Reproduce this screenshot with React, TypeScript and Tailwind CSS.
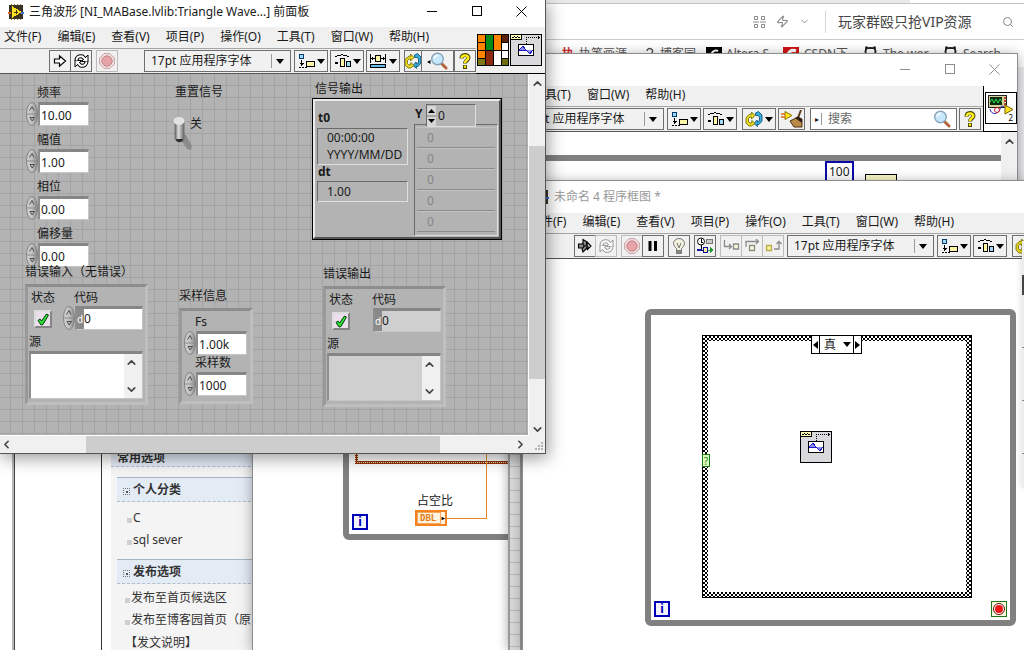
import type { ReactNode } from "react";
import { ChevronDown, ChevronUp, ChevronLeft, ChevronRight, Search, Github, Zap } from "lucide-react";

const fontStack = "font-['Noto_Sans','Noto_Sans_CJK_SC',sans-serif]";

/* ---------- icons ---------- */

const ViIcon = () => (
  <svg width="16" height="16" viewBox="0 0 16 16" shapeRendering="crispEdges" className="shrink-0">
    <rect x="1" y="1" width="14" height="14" fill="#3b3222" />
    <path d="M3 0v16M6 0v16M9 0v16M12 0v16" stroke="#8a7a58" strokeDasharray="1 14" />
    <path d="M0 9h3" stroke="#e8641c" strokeWidth="2" />
    <path d="M13 9h3" stroke="#3a72d8" strokeWidth="2" />
    <path d="M4 2l10 6-10 6z" fill="#ffe21f" />
    <path d="M6 8h4M8 6v4" stroke="#3b3222" />
  </svg>
);

const RunIcon = () => (
  <svg width="14" height="14" viewBox="0 0 14 14" fill="#fff" stroke="#000" strokeWidth="1.2">
    <path d="M1.5 5h5V1.8L12.5 7l-6 5.2V9h-5z" />
  </svg>
);

const BrokenRunIcon = () => (
  <svg width="16" height="16" viewBox="0 0 16 16" fill="#8b8b8b" stroke="#000" strokeWidth="1.1">
    <path d="M1.500 6h3l2-1 1 2-1 3h-5z" />
    <path d="M6 1.500l4 2.500-1 4 1 2-4 4-1-3 2.500-3L6 6z" />
    <path d="M10 4l4 4-4 4 1-3-1-2z" fill="#c9c9c9" />
  </svg>
);

const LoopIcon = ({ muted = false }: { muted?: boolean }) => {
  const ink = muted ? "#9a9a9a" : "#000";
  return (
    <svg width="17" height="16" viewBox="0 0 17 16" fill="none">
      <path d="M3.500 8C3.500 4 6 2.500 9.500 3.500L12 6M13.500 8c0 4-2.500 5.500-6 4.500L5 10" stroke={ink} strokeWidth="4" />
      <path d="M8.500 8.500h6.500V2zM8.500 7.500H2V14z" fill="#fff" stroke={ink} strokeLinejoin="round" />
      <path d="M3.500 7.500C3.500 4 6 2.500 9.500 3.500L13 7M13.500 8.500c0 3.500-2.500 5-6 4L4 9" stroke="#fff" strokeWidth="2" />
    </svg>
  );
};

const AbortIcon = () => (
  <svg width="16" height="16" viewBox="0 0 16 16">
    <path d="M5 .7h6L15.300 5v6L11 15.300H5L.7 11V5z" fill="#f4e6e6" stroke="#c39a9a" />
    <circle cx="8" cy="8" r="5.200" fill="#e8a3a6" stroke="#bf8488" />
  </svg>
);

const PauseIcon = () => (
  <svg width="12" height="12" viewBox="0 0 12 12">
    <path d="M1.500 1h3v10h-3zM7 1h3v10H7z" />
  </svg>
);

const BulbIcon = () => (
  <svg width="14" height="17" viewBox="0 0 14 17" fill="#f3f2de" stroke="#777">
    <path d="M4.500 10.500C3 9 1.500 7.500 1.500 5.500a5.500 5 0 0 1 11 0c0 2-1.500 3.500-3 5v2h-5z" />
    <path d="M5 5l2 5 2-5" fill="none" />
    <path d="M4.500 12.500h5v3h-5z" fill="#8b8b8b" />
  </svg>
);

const RetainIcon = () => (
  <svg width="18" height="18" viewBox="0 0 18 18" fill="none" shapeRendering="crispEdges">
    <circle cx="5" cy="4.500" r="3.500" fill="#fff" stroke="#000" shapeRendering="auto" />
    <path d="M5 2v3h2M5 8v5M1 13h7" stroke="#000" />
    <rect x="10.500" y="2.500" width="6" height="4" fill="#ccc" stroke="#777" />
    <rect x="7.500" y="10.500" width="4" height="5" fill="#ffef9a" stroke="#1414a8" />
    <path d="M1 13h5" stroke="#1414a8" strokeWidth="2" />
    <path d="M12 13h3M14 10l3 3-3 3z" stroke="#1d9d3d" fill="#1d9d3d" />
  </svg>
);

const StepIcon = ({ kind }: { kind: "into" | "over" | "out" }) => (
  <svg width="17" height="14" viewBox="0 0 17 14" fill="none" stroke="#8b8b8b" strokeWidth="1.300">
    {kind === "into" && (
      <>
        <path d="M1.500 1v6.500H8M6 5l2.500 2.500L6 10" />
        <path d="M10.500 5h5v5h-5z" fill="#fbf7d8" />
      </>
    )}
    {kind === "over" && (
      <>
        <path d="M2 8V2.500h12M12 0l2.500 2.500L12 5" />
        <path d="M5.500 6.500h5v5h-5z" fill="#fbf7d8" />
      </>
    )}
    {kind === "out" && (
      <>
        <path d="M9 10h5V3M11.500 5L14 2.500 16.500 5" />
        <path d="M1.500 6.500h5v5h-5z" fill="#f6f0a0" stroke="#b5ad4a" />
      </>
    )}
  </svg>
);

const AlignIcon = () => (
  <svg width="17" height="15" viewBox="0 0 17 15" shapeRendering="crispEdges" stroke="#000">
    <rect x="1.500" y=".5" width="4" height="4" fill="#9ddcf8" stroke="#0c3a6b" />
    <path d="M3.500 6v6M1.500 9.500h4M2.500 10.500h2M1 13.500h2M4 13.500h2M7 13.500h2" />
    <rect x="8.500" y="7.500" width="8" height="5" fill="#fdf5a6" />
  </svg>
);

const DistributeIcon = () => (
  <svg width="17" height="15" viewBox="0 0 17 15" shapeRendering="crispEdges" stroke="#000">
    <path d="M1 2.500h2M3 1.500h4M7 .5h2M9 1.500h4M13 2.500h2" />
    <path d="M1 8.500h3M1 9.500h3" />
    <rect x="6.500" y="4.500" width="4" height="8" fill="#fdf5a6" />
    <rect x="12.500" y="7.500" width="4" height="5" fill="#9ddcf8" />
  </svg>
);

const ResizeIcon = () => (
  <svg width="17" height="15" viewBox="0 0 17 15" shapeRendering="crispEdges" stroke="#000">
    <path d="M.5 0v9M15.500 0v9M1 4.500h4M11 4.500h4M2.500 3v3M13.500 3v3" />
    <rect x="5.500" y="1.500" width="5" height="6" fill="#fdf5a6" />
    <rect x=".5" y="10.500" width="15" height="3" fill="#66bfe6" />
  </svg>
);

const SwapIcon = () => (
  <svg width="18" height="16" viewBox="0 0 18 16" strokeWidth=".9" className="shrink-0">
    <path d="M10.500 2l3-1.500L17 4v6l-3 3.500h-2l.5 2-3.500-3 3-3.500.5 2h1L14.500 9V6L13 4.500h-2.500z" fill="#39a9d8" stroke="#10587e" />
    <path d="M5 3h2L6.500 1 10 4.500 6.500 8V6H5L3.500 7.500v3L5 12h1.500l.5-2.500 3 3L6.500 15H4L1 12V6.500z" fill="#e6d81e" stroke="#7d7408" />
  </svg>
);

const BroomIcon = () => (
  <svg width="22" height="18" viewBox="0 0 22 18">
    <path d="M20 0l-3 8" stroke="#5c3a1c" strokeWidth="2" />
    <path d="M9 11l8-4 4 2v8H13z" fill="#b98a48" stroke="#4a2f10" />
    <path d="M14 8l3-1.500 4 3v3.500z" fill="#2b2018" />
    <path d="M4 1.500l7 4-7 4z" fill="#ffe21f" stroke="#8a7200" />
    <path d="M0 4h4M0 7h4" stroke="#e06a1c" strokeWidth="1.500" />
  </svg>
);

const Magnifier = ({ arrow = false }: { arrow?: boolean }) => (
  <svg width="22" height="18" viewBox="0 0 22 18" className="shrink-0">
    {arrow && <path d="M0 10l3.500-2v4z" fill="#000" />}
    <path d="M14 11l5 5" stroke="#b4643c" strokeWidth="3" strokeLinecap="round" />
    <circle cx="10.500" cy="7" r="5.800" fill="#c6e8fa" stroke="#8aa5bb" strokeWidth="1.400" />
    <path d="M7 6.500a4 4 0 0 1 4-3" stroke="#fff" strokeWidth="1.500" fill="none" />
  </svg>
);

const HelpIcon = () => (
  <svg width="12" height="16" viewBox="0 0 12 16" fill="none">
    <path d="M2.500 5.500C2.500 1 9.500 1 9.500 4.800 9.500 7.500 6 7.200 6 10.500" stroke="#4c4600" strokeWidth="4" />
    <path d="M4 12h4v4H4z" fill="#4c4600" />
    <path d="M2.600 5.200C3 1.500 9.200 1.500 9.300 4.800 9.300 7.200 6 7.200 6 10" stroke="#fff01c" strokeWidth="2.400" />
    <path d="M4.900 12.600h2.200v2.200H4.900z" fill="#fff01c" />
  </svg>
);

const ConnectorPane = () => (
  <svg width="32" height="32" viewBox="0 0 32 32" shapeRendering="crispEdges" stroke="#000">
    <path d="M.5.500h8v8h-8zM.5 8.500h8v8h-8zM.5 16.500h8v8h-8z" fill="#ff8400" />
    <path d="M.5 24.500h8v7h-8z" fill="#7d7a16" />
    <path d="M8.500.500h8v16h-8z" fill="#068c16" />
    <path d="M8.500 16.500h8v15h-8z" fill="#8c2a0e" />
    <path d="M16.500.500h8v16h-8z" fill="#ff8400" />
    <path d="M16.500 16.500h8v15h-8z" fill="#fff" />
    <path d="M24.500.500h7v8h-7z" fill="#5c240c" />
    <path d="M24.500 8.500h7v8h-7zM24.500 16.500h7v8h-7z" fill="#fff" />
    <path d="M24.500 24.500h7v7h-7z" fill="#6f6c12" />
  </svg>
);

const TriangleWaveIcon = () => (
  <svg width="32" height="32" viewBox="0 0 32 32" shapeRendering="crispEdges">
    <rect x=".5" y=".5" width="31" height="31" fill="#d9d9dc" stroke="#000" />
    <rect x=".5" y=".5" width="11" height="5" fill="#ffffb0" stroke="#000" />
    <path d="M2 3.500h2M4 2.500h1M5 3.500h2M7 2.500h1M8 3.500h2" stroke="#000" />
    <path d="M16.500 3v7M16 3.500h12" stroke="#000" strokeDasharray="1 1" fill="none" />
    <path d="M28 2v3l2-1.500z" fill="#000" />
    <rect x="8.500" y="10.500" width="15" height="11" fill="#fff" stroke="#000" />
    <path d="M9 16h14" stroke="#1a1ac8" />
    <path d="M9 16l4-4 3 4M16 16l4 4 3-4" fill="#8f8fe6" stroke="#1a1ac8" />
  </svg>
);

const ScopeIcon = () => (
  <svg width="32" height="32" viewBox="0 0 32 32">
    <rect x=".5" y=".5" width="31" height="31" fill="#fff" stroke="#000" />
    <rect x="3.500" y="3.500" width="18" height="12" fill="#d5cf9a" stroke="#222" />
    <rect x="5" y="5" width="12" height="8" fill="#0c2c12" />
    <path d="M5 10l2-3 2 4 2-4 2 4 2-4 2 3" stroke="#31e052" fill="none" />
    <path d="M19 6h2M19 9h2M19 12h2" stroke="#b01818" strokeWidth="1.500" />
    <path d="M5 17c1 6 8 6 10 0s4-1 8 0" stroke="#2424c8" fill="none" />
    <circle cx="12" cy="18" r="2.500" fill="none" stroke="#d02020" />
    <path d="M20 13l8 4.500-8 4.500z" fill="#ffe21f" stroke="#7a5c00" />
    <text x="23.500" y="29" fontSize="8" fill="#000">2</text>
  </svg>
);

const Caret = () => (
  <svg width="8" height="5" viewBox="0 0 8 5" className="pointer-events-none shrink-0">
    <path d="M0 0h8L4 5z" />
  </svg>
);

const CheckMark = () => (
  <svg width="12" height="13" viewBox="0 0 12 13">
    <path d="M1 7.500l2-1.500 1.500 2L9.500 1l2 1L6 11.500l-2 .5z" fill="#2fdc3a" stroke="#063f0a" />
  </svg>
);

/* ---------- window chrome ---------- */

const Caption = ({ muted = false, className }: { muted?: boolean; className: string }) => (
  <div className={`flex shrink-0 ${muted ? "text-[#8e8e8e]" : "text-black"} ${className}`}>
    <button aria-label="最小化" className="flex w-[45px] items-center justify-center">
      <svg width="10" height="10" viewBox="0 0 10 10" stroke="currentColor" shapeRendering="crispEdges"><path d="M0 5.500h10" /></svg>
    </button>
    <button aria-label="最大化" className="flex w-[45px] items-center justify-center">
      <svg width="10" height="10" viewBox="0 0 10 10" stroke="currentColor" fill="none" shapeRendering="crispEdges"><path d="M.5.500h9v9h-9z" /></svg>
    </button>
    <button aria-label="关闭" className="flex w-[45px] items-center justify-center">
      <svg width="11" height="11" viewBox="0 0 11 11" stroke="currentColor"><path d="M.5.500l10 10M10.500.500l-10 10" /></svg>
    </button>
  </div>
);

const MenuBar = ({ items, className }: { items: string[]; className: string }) => (
  <nav className={`flex items-center gap-4 whitespace-nowrap bg-[#f0f0f0] pb-0.5 ${className}`}>
    {items.map((item) => (
      <button key={item} className="shrink-0 leading-4">{item}</button>
    ))}
  </nav>
);

const ToolBtn = ({ label, className = "w-[22px]", faint = false, children }: { label: string; className?: string; faint?: boolean; children: ReactNode }) => (
  <button
    aria-label={label}
    className={`flex h-[22px] shrink-0 items-center justify-center gap-0.5 overflow-hidden border bg-[#f1f1f1] ${faint ? "border-[#bcbcbc]" : "border-[#6f6f6f]"} ${className}`}
  >
    {children}
  </button>
);

const FontSelect = ({ className = "" }: { className?: string }) => (
  <div className={`flex h-[22px] w-[147px] shrink-0 items-center border border-[#6f6f6f] bg-[#f1f1f1] pr-1.5 ${className}`}>
    <select aria-label="字体" className="h-5 min-w-0 flex-1 appearance-none pl-1.5 outline-none">
      <option>17pt 应用程序字体</option>
    </select>
    <span className="mr-1 h-3.5 w-px bg-[#9a9a9a]" />
    <Caret />
  </div>
);

const LayoutTools = () => (
  <>
    <ToolBtn label="对齐对象" className="ml-[3px] w-[34px]"><AlignIcon /><Caret /></ToolBtn>
    <ToolBtn label="分布对象" className="ml-0.5 w-[34px]"><DistributeIcon /><Caret /></ToolBtn>
  </>
);

const toolbarLook = "flex h-[26px] items-center border-y border-t-[#a5a5a5] border-b-[#555] bg-[#f0f0f0]";

/* ---------- front panel controls ---------- */

const Spinner = () => (
  <svg width="12" height="24" viewBox="0 0 12 24" className="shrink-0">
    <defs>
      <linearGradient id="knob" x1="0" x2="1">
        <stop offset="0" stopColor="#d2d2d2" />
        <stop offset=".5" stopColor="#c2c2c2" />
        <stop offset="1" stopColor="#868686" />
      </linearGradient>
    </defs>
    <ellipse cx="6" cy="12" rx="5.500" ry="11.500" fill="url(#knob)" stroke="#848484" />
    <path d="M1 12h10" stroke="#8a8a8a" />
    <path d="M3.500 8.500L6 4.500l2 4M4 15.500h4.500L6.200 19z" fill="none" stroke="#4f4f4f" />
  </svg>
);

const sunken = "border-t-[3px] border-l-2 border-r border-b border-t-[#868686] border-l-[#8e8e8e] border-r-[#c6c6c6] border-b-[#c6c6c6]";
const clusterEdge = "border-[3px] border-t-[#8d8d8d] border-l-[#999] border-r-[#bfbfbf] border-b-[#bfbfbf] bg-[#b3b3b3]";

const NumericControl = ({ id, label, value }: { id: string; label: string; value: string }) => (
  <div className="flex flex-col gap-px">
    <label htmlFor={id} className="ml-[11px] leading-4">{label}</label>
    <div className="flex">
      <Spinner />
      <input id={id} defaultValue={value} className={`h-6 w-[51px] bg-white pl-px outline-none ${sunken}`} />
    </div>
  </div>
);

const ErrorCluster = ({ id, indicator = false }: { id: string; indicator?: boolean }) => {
  const fill = indicator ? "bg-[#cfcfcf]" : "bg-white";
  return (
    <div className={`h-[121px] w-[123px] pt-[3px] ${clusterEdge}`}>
      <div className="flex pl-[3px]">
        <div className="w-8 shrink-0">
          <p className="leading-4">状态</p>
          <button aria-label="状态" className="ml-[3px] mt-1 flex size-[18px] items-center justify-center border-2 border-t-[#ddd] border-l-[#ddd] border-r-[#858585] border-b-[#858585] bg-[#ecdfec]">
            <CheckMark />
          </button>
        </div>
        <div>
          <label htmlFor={`${id}-code`} className="ml-[11px] block leading-4">代码</label>
          <div className="flex">
            {indicator ? <span className="w-3" /> : <Spinner />}
            <div className={`flex h-6 w-[68px] ${sunken} ${fill}`}>
              <span className="w-[7px] shrink-0 bg-[#8a8a8a] text-[10px] leading-5 text-white">d</span>
              <input id={`${id}-code`} defaultValue="0" readOnly={indicator} className="w-0 flex-1 outline-none" />
            </div>
          </div>
        </div>
      </div>
      <label htmlFor={`${id}-source`} className="ml-px mt-1 block leading-4">源</label>
      <div className={`ml-px mt-px flex h-12 w-[114px] ${sunken} ${fill}`}>
        <textarea id={`${id}-source`} readOnly={indicator} className="w-0 flex-1 resize-none outline-none" />
        <div className="flex w-[18px] flex-col items-center justify-between bg-[#f0f0f0] py-0.5 pr-1 text-[#444]">
          <ChevronUp size={13} strokeWidth={3} />
          <ChevronDown size={13} strokeWidth={3} />
        </div>
      </div>
    </div>
  );
};

const readout = "border border-t-[#6a6a6a] border-l-[#6a6a6a] border-r-[#dedede] border-b-[#dedede]";

const WaveformCluster = () => (
  <div className="border border-black">
    <div className="flex h-[140px] w-[188px] border-2 border-t-[#ececec] border-l-[#ececec] border-r-[#555] border-b-[#555] bg-[#b3b3b3] pl-0.5">
      <div className="w-[91px] pt-[9px]">
        <h3 className="pl-px font-bold leading-4">t0</h3>
        <div className={`mt-0.5 h-[37px] overflow-hidden whitespace-nowrap pl-[9px] leading-[17px] ${readout}`}>
          <p>00:00:00</p>
          <p>YYYY/MM/DD</p>
        </div>
        <h3 className="pl-px font-bold leading-[14px]">dt</h3>
        <p className={`mt-0.5 pl-[9px] leading-[19px] ${readout}`}>1.00</p>
      </div>
      <div className="ml-1.5 w-[84px] pt-[3px]">
        <div className="relative flex">
          <label htmlFor="y-index" className="w-3 pl-px font-bold leading-5">Y</label>
          <div className={`flex h-[23px] w-[50px] items-center bg-[#b3b3b3] ${readout}`}>
            <svg width="9" height="20" viewBox="0 0 9 20" className="bg-[#d6d6d6]">
              <path d="M1 7l3.500-4L8 7zM1 13l3.500 4L8 13z" />
              <path d="M0 10h9" stroke="#777" />
            </svg>
            <input id="y-index" defaultValue="0" className="w-0 flex-1 pl-0.5 outline-none" />
          </div>
        </div>
        <ul className={`-mt-[3px] h-[112px] p-0.5 text-[#858585] ${readout}`}>
          {[0, 1, 2, 3, 4].map((row) => (
            <li key={row} className="h-[21px] border-b border-t border-b-[#8c8c8c] border-t-[#c4c4c4] pl-2.5 leading-[19px]">0</li>
          ))}
        </ul>
      </div>
    </div>
  </div>
);

const ToggleSwitch = () => (
  <svg width="24" height="36" viewBox="0 0 24 36">
    <defs>
      <linearGradient id="lever" x1="0" x2="1">
        <stop offset="0" stopColor="#6c6c6c" />
        <stop offset=".4" stopColor="#dcdcdc" />
        <stop offset="1" stopColor="#6a6a6a" />
      </linearGradient>
    </defs>
    <path d="M10 16l5 3 6 11-1 4-4-1-6-9z" fill="#8b8b8b" />
    <rect x="4" y="3" width="9" height="23" rx="4.500" fill="url(#lever)" stroke="#707070" />
    <ellipse cx="8" cy="5" rx="5.500" ry="4" fill="#e3e3e3" />
    <path d="M5 23a3.500 3 0 0 0 7 0z" fill="#2c2c2c" />
  </svg>
);

const FrontPanelWindow = () => (
  <section className="absolute left-0 top-0 flex h-[454px] w-[546px] flex-col border-b border-r border-[#555] bg-[#f0f0f0] shadow-[2px_4px_16px_rgba(0,0,0,0.4)]">
    <header className="flex h-[27px] shrink-0 bg-white pl-2 pr-px">
      <div className="flex h-[23px] flex-1 items-center gap-[5px] whitespace-nowrap">
        <ViIcon />
        <h1>三角波形 [NI_MABase.lvlib:Triangle Wave...] 前面板</h1>
      </div>
      <Caption className="h-[22px]" />
    </header>
    <div className="flex shrink-0">
      <div className="min-w-0 flex-1">
        <MenuBar className="h-[21px] pl-1" items={["文件(F)", "编辑(E)", "查看(V)", "项目(P)", "操作(O)", "工具(T)", "窗口(W)", "帮助(H)"]} />
        <div className={`pl-[49px] ${toolbarLook}`}>
          <ToolBtn label="运行"><RunIcon /></ToolBtn>
          <ToolBtn label="连续运行" className="-ml-px w-[22px]"><LoopIcon /></ToolBtn>
          <ToolBtn label="中止执行" className="ml-1 w-[22px]" faint><AbortIcon /></ToolBtn>
          <FontSelect className="ml-[26px]" />
          <LayoutTools />
          <ToolBtn label="调整对象大小" className="ml-0.5 w-[34px]"><ResizeIcon /><Caret /></ToolBtn>
          <ToolBtn label="重新排序" className="ml-1 w-[18px]"><SwapIcon /></ToolBtn>
          <ToolBtn label="搜索" className="-ml-px w-[33px]"><Magnifier arrow /></ToolBtn>
          <ToolBtn label="帮助"><HelpIcon /></ToolBtn>
        </div>
      </div>
      <div className="flex w-[69px] shrink-0 gap-px border-b border-black pl-px pt-[7px]">
        <ConnectorPane />
        <TriangleWaveIcon />
      </div>
    </div>

    <div className="flex min-h-0 flex-1">
      {/* snap grid: one line every 12px */}
      <div className="relative flex-1 overflow-hidden border-b border-r border-white bg-[#b3b3b3] bg-[linear-gradient(#a3a3a3_1px,transparent_1px),linear-gradient(90deg,#a3a3a3_1px,transparent_1px)] bg-[size:12px_12px] bg-[position:10px_11px]">
        <div className="absolute left-[26px] top-[11px] flex flex-col gap-1.5">
          <NumericControl id="freq" label="频率" value="10.00" />
          <NumericControl id="amp" label="幅值" value="1.00" />
          <NumericControl id="phase" label="相位" value="0.00" />
          <NumericControl id="offset" label="偏移量" value="0.00" />
        </div>

        <div className="absolute left-[175px] top-[10px] leading-4">
          <p>重置信号</p>
          <button aria-label="重置信号" className="mt-4 flex items-start">
            <span className="-ml-1"><ToggleSwitch /></span>
            <span className="-ml-[5px] leading-4">关</span>
          </button>
        </div>

        <p className="absolute left-[315px] top-[7px] leading-4">信号输出</p>
        <div className="absolute left-[312px] top-6"><WaveformCluster /></div>

        <p className="absolute left-[25px] top-[190px] leading-4">错误输入（无错误）</p>
        <div className="absolute left-[25px] top-[210px]"><ErrorCluster id="error-in" /></div>

        <p className="absolute left-[179px] top-[214px] leading-4">采样信息</p>
        <div className={`absolute left-[179px] top-[234px] h-24 w-[74px] pl-0.5 pt-[3px] ${clusterEdge}`}>
          <NumericControl id="fs" label="Fs" value="1.00k" />
          <NumericControl id="samples" label="采样数" value="1000" />
        </div>

        <p className="absolute left-[323px] top-[192px] leading-4">错误输出</p>
        <div className="absolute left-[323px] top-[212px]"><ErrorCluster id="error-out" indicator /></div>
      </div>
      <div className="flex w-4 flex-col items-center bg-[#f0f0f0] text-[#444]">
        <button aria-label="向上滚动" className="flex h-[72px] pt-[3px]"><ChevronUp size={13} strokeWidth={3} /></button>
        <div className="h-[233px] w-full bg-[#cdcdcd]" />
        <button aria-label="向下滚动" className="mt-auto"><ChevronDown size={13} strokeWidth={3} /></button>
      </div>
    </div>
    <div className="flex h-[17px] shrink-0 items-center bg-[#f0f0f0] text-[#444]">
      <button aria-label="向左滚动" className="w-[86px]"><ChevronLeft size={13} strokeWidth={3} /></button>
      <div className="h-full w-[354px] bg-[#cdcdcd]" />
      <button aria-label="向右滚动" className="ml-auto"><ChevronRight size={13} strokeWidth={3} /></button>
      <svg width="16" height="16" viewBox="0 0 16 16" fill="#b5b5b5" className="ml-0.5">
        <path d="M12 5h2v2h-2zM9 8h2v2H9zM12 8h2v2h-2zM6 11h2v2H6zM9 11h2v2H9zM12 11h2v2h-2z" />
      </svg>
    </div>
  </section>
);

/* ---------- block diagrams ---------- */

const IterationTerminal = () => (
  <div className="flex size-4 items-center justify-center border-2 border-[#0000b8] bg-[#f3f3ff] font-bold leading-3 text-[#0000b8]">i</div>
);

const BackDiagramWindow = () => (
  <section className="absolute bottom-0 left-[252px] right-[6px] top-[53px] flex flex-col overflow-hidden border-l border-r border-t border-[#8d8d8d] bg-white shadow-[0_2px_12px_rgba(0,0,0,0.35)]">
    <header className="flex h-8 shrink-0 justify-end">
      <Caption muted className="h-[30px]" />
    </header>
    <div className="flex shrink-0">
      <div className="min-w-0 flex-1">
        <MenuBar className="h-5 pl-[280px]" items={["工具(T)", "窗口(W)", "帮助(H)"]} />
        <div className={`pl-[264px] ${toolbarLook}`}>
          <FontSelect />
          <LayoutTools />
          <ToolBtn label="重新排序" className="ml-[5px] w-[34px]"><SwapIcon /><Caret /></ToolBtn>
          <ToolBtn label="整理程序框图" className="ml-0.5 w-[27px]"><BroomIcon /></ToolBtn>
          <label className="ml-[5px] flex h-[22px] min-w-0 flex-1 items-center border border-[#6f6f6f] bg-white px-1">
            <span className="border-r border-[#999] pr-0.5 text-[8px] leading-3">▸</span>
            <input placeholder="搜索" className="w-0 flex-1 pl-1.5 outline-none placeholder:text-[#666]" />
            <Magnifier />
          </label>
          <ToolBtn label="帮助" className="ml-0.5 mr-0.5 w-[22px]"><HelpIcon /></ToolBtn>
        </div>
      </div>
      <div className="w-[34px] shrink-0 border-b border-l border-black pl-px pt-1.5"><ScopeIcon /></div>
    </div>
    <div className="flex min-h-0 flex-1">
      <div className="relative flex-1 overflow-hidden">
        <div className="absolute -right-2 left-[90px] top-[23px] h-[385px] rounded-md border-[6px] border-[#808080]" />
        <div className="absolute left-[572px] top-[29px] border-2 border-[#0a0aa8] px-0.5 leading-[17px]">100</div>
        <div className="absolute left-[612px] top-[42px] h-8 w-8 border border-black bg-[#fbf8c8]" />
        <div className="absolute left-[102px] top-[200px] h-[132px] w-[300px] bg-[repeating-conic-gradient(#8c3206_0_75%,#ffd9b8_0_100%)] bg-[size:2px_2px] p-[3px]">
          <div className="h-full bg-white" />
        </div>
        <svg width="42" height="80" className="absolute left-[194px] top-[307px]" fill="none" stroke="#e08a2a">
          <path d="M39.500 0v80M0 79.500h40" />
        </svg>
        <p className="absolute left-[164px] top-[361px] leading-4">占空比</p>
        <div className="absolute left-[162px] top-[378px] flex h-4 w-8 items-center border-2 border-[#f58220] bg-[#fff2df] font-['DejaVu_Sans_Mono',monospace] text-[9px] font-bold leading-3 text-[#e07b15]">
          <span className="flex-1 border border-[#f5a860] pl-0.5 leading-[10px]">DBL</span>
          <span className="text-[6px] text-black">▶</span>
        </div>
        <div className="absolute left-[99px] top-[382px]"><IterationTerminal /></div>
      </div>
      <div className="flex w-4 flex-col items-center bg-[#f0f0f0] pt-[3px] text-[#444]"><ChevronUp size={13} strokeWidth={3} /></div>
    </div>
  </section>
);

const CaseStructure = () => (
  <div className="absolute left-[179px] top-[76px] h-[263px] w-[270px] border border-black bg-[repeating-conic-gradient(#000_0_25%,#fff_0_50%)] bg-[size:4px_4px] p-[5px]">
    <div className="h-full bg-white" />
    <div className="absolute left-[108px] top-[-1px] flex h-[19px] w-[51px] border border-black bg-white">
      <button aria-label="上一分支" className="flex w-2 items-center justify-center border-r border-black">
        <svg width="5" height="8" viewBox="0 0 5 8"><path d="M5 0v8L0 4z" /></svg>
      </button>
      <div className="flex flex-1 items-center justify-between pl-1 pr-0.5">
        <select aria-label="分支" className="w-4 appearance-none leading-4 outline-none"><option>真</option></select>
        <Caret />
      </div>
      <button aria-label="下一分支" className="flex w-2 items-center justify-center border-l border-black">
        <svg width="5" height="8" viewBox="0 0 5 8"><path d="M0 0v8l5-4z" /></svg>
      </button>
    </div>
    <div className="absolute left-[-1px] top-[118px] flex h-[13px] w-2 items-center justify-center border border-[#1c7a14] bg-[#dcffc0] text-[10px] leading-3 text-[#1c7a14]">?</div>
    <div className="absolute left-[97px] top-[95px]"><TriangleWaveIcon /></div>
  </div>
);

const DiagramWindow = () => (
  <section className="absolute bottom-0 left-[522px] right-0 top-[180px] flex flex-col overflow-hidden border-l border-t border-[#8d8d8d] bg-white shadow-[0_2px_12px_rgba(0,0,0,0.35)]">
    <header className="flex h-8 shrink-0 items-center gap-[5px] pl-2.5 text-[#999]">
      <ViIcon />
      <h2>未命名 4 程序框图 *</h2>
    </header>
    <MenuBar className="h-5 shrink-0 pl-1.5" items={["文件(F)", "编辑(E)", "查看(V)", "项目(P)", "操作(O)", "工具(T)", "窗口(W)", "帮助(H)"]} />
    <div className={`shrink-0 pl-[51px] ${toolbarLook}`}>
      <ToolBtn label="运行"><BrokenRunIcon /></ToolBtn>
      <ToolBtn label="连续运行" className="-ml-px w-[22px]" faint><LoopIcon muted /></ToolBtn>
      <ToolBtn label="中止执行" className="ml-1 w-[22px]" faint><AbortIcon /></ToolBtn>
      <ToolBtn label="暂停" className="-ml-px w-[22px]"><PauseIcon /></ToolBtn>
      <ToolBtn label="高亮显示执行过程" className="ml-1 w-[22px]"><BulbIcon /></ToolBtn>
      <ToolBtn label="保存连线值" className="ml-1 w-[22px]"><RetainIcon /></ToolBtn>
      <ToolBtn label="单步步入" className="ml-1 w-[22px]" faint><StepIcon kind="into" /></ToolBtn>
      <ToolBtn label="单步步过" className="-ml-px w-[22px]" faint><StepIcon kind="over" /></ToolBtn>
      <ToolBtn label="单步步出" className="-ml-px w-[22px]" faint><StepIcon kind="out" /></ToolBtn>
      <FontSelect className="ml-[3px]" />
      <LayoutTools />
      <ToolBtn label="重新排序" className="ml-[5px] w-[34px]"><SwapIcon /><Caret /></ToolBtn>
    </div>
    <div className="relative min-h-0 flex-1">
      <div className="absolute left-[122px] top-[50px] h-[317px] w-[371px] rounded-md border-[6px] border-[#808080]" />
      <CaseStructure />
      <div className="absolute left-[131px] top-[342px]"><IterationTerminal /></div>
      <div className="absolute left-[468px] top-[342px] border border-[#1c7a14] bg-[#fffbe0]">
        <svg width="14" height="14" viewBox="0 0 14 14">
          <circle cx="7" cy="7" r="5.500" fill="#fff" stroke="#5c0c0c" />
          <circle cx="7" cy="7" r="4" fill="#f01414" />
        </svg>
      </div>
    </div>
  </section>
);

/* Sliver of another front panel showing between the two diagrams. */
const FrontPanelEdge = () => (
  <div className="absolute bottom-0 left-[508px] top-[300px] w-[14px] border-x-2 border-[#9a9a9a] bg-[#d9d9d9] bg-[linear-gradient(#b9b9b9_1px,transparent_1px)] bg-[size:12px_12px] bg-[position:0_10px] shadow-[-2px_0_10px_rgba(0,0,0,0.25)]" />
);

const PaletteEdge = () => (
  <div className="absolute right-0 top-[241px] flex h-[247px] w-0.5 flex-col justify-between bg-[#ececec] py-[34px] shadow-[0_0_6px_rgba(0,0,0,0.3)]">
    <span className="h-5 border border-[#444]" />
    <span className="h-px bg-[#888]" />
    <span className="h-px bg-[#888]" />
    <span className="h-px bg-[#888]" />
  </div>
);

/* ---------- browser behind everything ---------- */

const bookmarkLook = "flex w-[80px] shrink-0 items-center gap-[5px] overflow-hidden";

const SideHeading = ({ children }: { children: ReactNode }) => (
  <h4 className="flex h-[25px] items-center gap-[3px] border-b border-t border-b-[#b5bccb] border-t-[#a9b4c2] [border-bottom-style:dashed] bg-[#e3ebf5] pl-1.5 font-bold">
    <span className="mt-1 flex size-[7px] items-center justify-center border border-dotted border-[#777]"><span className="size-0.5 bg-[#555]" /></span>
    {children}
  </h4>
);

const SideLink = ({ children }: { children: ReactNode }) => (
  <a href="#" className="flex items-center gap-px whitespace-nowrap leading-[22px]">
    <span className="mt-1 size-[5px] shrink-0 bg-[#cfcfcf]" />
    {children}
  </a>
);

const Browser = () => (
  <div className="absolute inset-0 flex flex-col bg-white">
    <div className="flex h-1 shrink-0 justify-end border-b border-[#c4c4c4] bg-[#e9e9e9]"><span className="w-[114px] bg-white" /></div>
    <div className="flex h-9 shrink-0 items-center justify-end border-b border-[#c9c9c9] pr-2.5 text-[#888]">
      <svg width="13" height="12" viewBox="0 0 13 12" fill="none" stroke="currentColor">
        <path d="M1.500.500h3v3h-3zM8.500.500h3v3h-3zM1.500 8.500h3v3h-3zM8.500 8.500h3v3h-3zM0 6h6M7 6h6" />
      </svg>
      <Zap size={13} strokeWidth={2} className="ml-2.5" />
      <ChevronDown size={11} className="ml-[10px]" />
      <span className="ml-[15px] h-[22px] w-px bg-[#d5d5d5]" />
      <input aria-label="搜索网页" defaultValue="玩家群殴只抢VIP资源" className="ml-3 w-[164px] text-sm text-[#444] outline-none" />
      <Search size={12} />
    </div>
    <div className="flex h-[27px] shrink-0 items-center justify-end whitespace-nowrap pr-[1px] text-[#555]">
      <a href="#" className="flex w-[78px] shrink-0 items-center gap-[5px]">
        <span className="w-3 font-bold text-[#d02a2a]">执</span>执笔画涯
      </a>
      <a href="#" className="flex w-[66px] shrink-0 items-center gap-1.5">
        <svg width="14" height="14" viewBox="0 0 14 14" fill="none" stroke="#555" strokeWidth="1.500"><path d="M1 8l3 4M7 4a2.800 2.800 0 1 1 5 2c-1 3-3 5-5 7" /></svg>
        博客园
      </a>
      <a href="#" className="flex w-[77px] shrink-0 items-center gap-1">
        <svg width="16" height="14" viewBox="0 0 16 14"><path d="M0 0h16v14H0z" /><path d="M12 4C8 2 4 6 6 11" stroke="#fff" strokeWidth="2" fill="none" /></svg>
        Altera S
      </a>
      <a href="#" className={bookmarkLook}>
        <svg width="16" height="14" viewBox="0 0 16 14" className="shrink-0"><path d="M0 0h16v14H0z" fill="#d01414" /><path d="M13 4C8 2 5 5 4 11" stroke="#fff" strokeWidth="3" fill="none" /></svg>
        CSDN下
      </a>
      <a href="#" className={bookmarkLook}><Github size={15} strokeWidth={3} color="#222" className="shrink-0" />The wor</a>
      <a href="#" className={bookmarkLook}><Github size={15} strokeWidth={3} color="#222" className="shrink-0" />Search</a>
    </div>
    <div className="flex min-h-0 flex-1 bg-white">
      <div className="ml-3 w-[3px] border-r border-[#444] bg-[#b8b8b8]" />
      <div className="w-[87px] border-r border-[#333]" />
      <aside className="ml-[9px] w-[150px] overflow-hidden bg-[#f4f4f4] pt-[383px] text-[#333]">
        <h4 className="border-b border-dashed border-[#b5bccb] bg-[#e3ebf5] pl-1.5 font-bold leading-4">常用选项</h4>
        <div className="ml-1.5 mt-2.5">
          <SideHeading>个人分类</SideHeading>
          <div className="pb-1 pl-[10px] pt-[5px]">
            <SideLink>C</SideLink>
            <SideLink>sql sever</SideLink>
          </div>
          <div className="mt-1"><SideHeading>发布选项</SideHeading></div>
          <div className="pl-2 pt-[3px]">
            <SideLink>发布至首页候选区</SideLink>
            <SideLink>发布至博客园首页（原</SideLink>
            <a href="#" className="block whitespace-nowrap leading-6">【发文说明】</a>
          </div>
        </div>
      </aside>
      <div className="flex-1 bg-[#ececf0]" />
    </div>
  </div>
);

const App = () => (
  <main className={`relative h-screen overflow-hidden bg-white text-xs text-[#1a1a1a] ${fontStack}`}>
    <Browser />
    <BackDiagramWindow />
    <FrontPanelEdge />
    <DiagramWindow />
    <PaletteEdge />
    <FrontPanelWindow />
  </main>
);

export default App;
